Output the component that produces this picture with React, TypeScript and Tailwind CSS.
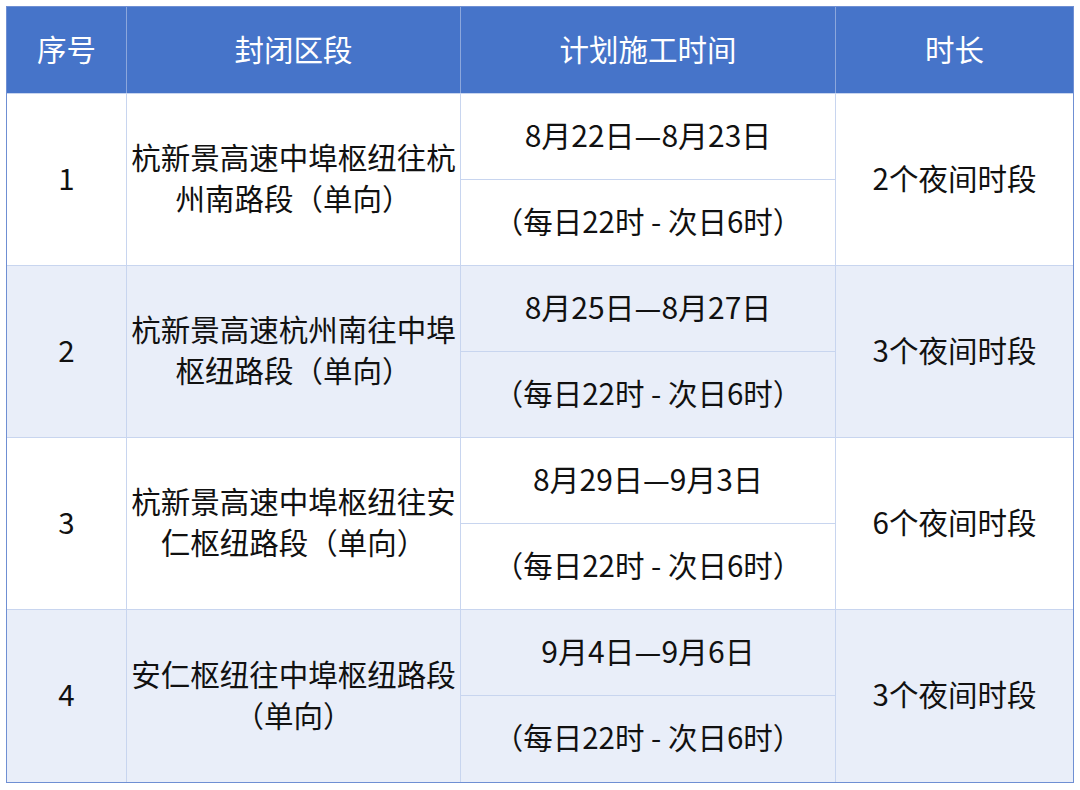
const rows = [
  {
    no: "1",
    section: ["杭新景高速中埠枢纽往杭", "州南路段（单向）"],
    date: "8月22日—8月23日",
    duration: "2个夜间时段",
  },
  {
    no: "2",
    section: ["杭新景高速杭州南往中埠", "枢纽路段（单向）"],
    date: "8月25日—8月27日",
    duration: "3个夜间时段",
  },
  {
    no: "3",
    section: ["杭新景高速中埠枢纽往安", "仁枢纽路段（单向）"],
    date: "8月29日—9月3日",
    duration: "6个夜间时段",
  },
  {
    no: "4",
    section: ["安仁枢纽往中埠枢纽路段", "（单向）"],
    date: "9月4日—9月6日",
    duration: "3个夜间时段",
  },
];

const cell = "flex items-center justify-center text-center border-[#c8d5ef] pb-[5px]";

export default function App() {
  return (
    <div className="w-[1080px] h-[790px] bg-white pl-[6px] pt-[6px] font-['Noto_Sans_CJK_SC','Noto_Sans',sans-serif] text-[29.5px] leading-[41px] text-[#111]">
      <div className="w-[1068px] border border-[#6f8fd3]">
        <div className="grid grid-cols-[120px_334px_375px_237px] h-[87px] bg-[#4674c9] text-white border-b border-[#c8d5ef]">
          <div className="flex items-center justify-center pb-[4px] border-r border-[#8ca7dc]">序号</div>
          <div className="flex items-center justify-center pb-[4px] border-r border-[#8ca7dc]">封闭区段</div>
          <div className="flex items-center justify-center pb-[4px] border-r border-[#8ca7dc]">计划施工时间</div>
          <div className="flex items-center justify-center pb-[4px]">时长</div>
        </div>

        {rows.map((r, i) => (
          <div
            key={r.no}
            className={`grid grid-cols-[120px_334px_375px_237px] ${
              i < rows.length - 1 ? "grid-rows-[86px_85px] border-b border-[#c8d5ef]" : "grid-rows-[86px_86px]"
            } ${i % 2 === 1 ? "bg-[#e9eef9]" : "bg-white"}`}
          >
            <div className={`${cell} row-span-2 border-r`}>{r.no}</div>
            <div className={`${cell} row-span-2 border-r flex-col`}>
              {r.section.map((line) => (
                <span key={line}>{line}</span>
              ))}
            </div>
            <div className={`${cell} border-r border-b`}>
              <span className="text-[30px]">{r.date}</span>
            </div>
            <div className={`${cell} row-span-2 col-start-4 row-start-1`}>{r.duration}</div>
            <div className={`${cell} border-r col-start-3`}>（每日22时 - 次日6时）</div>
          </div>
        ))}
      </div>
    </div>
  );
}
